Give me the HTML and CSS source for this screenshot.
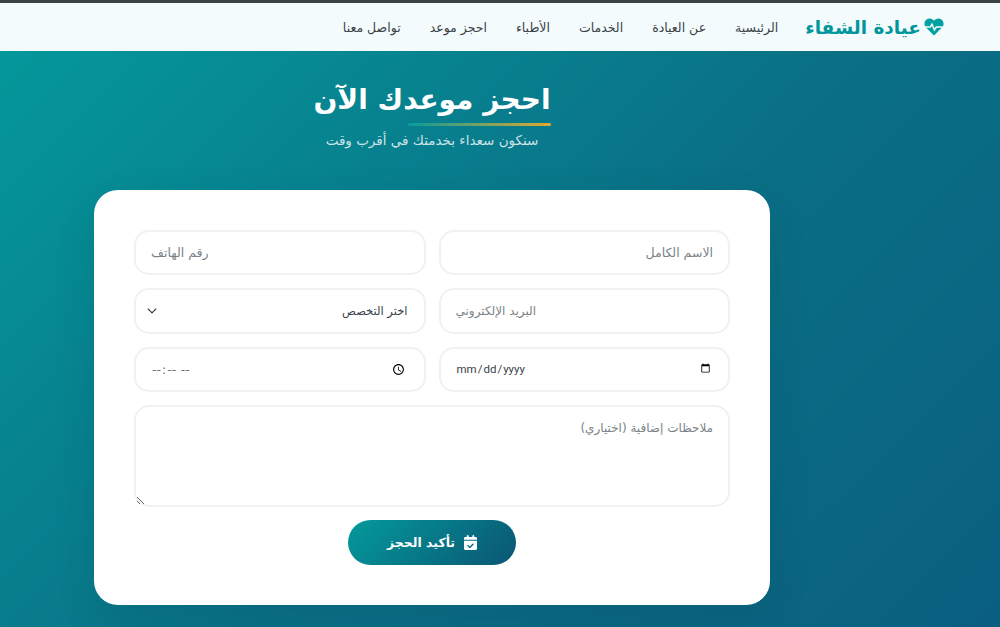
FILE: index.html
```html
<!DOCTYPE html>
<html lang="ar" dir="rtl">
<head>
<meta charset="utf-8">
<title>عيادة الشفاء</title>
<link rel="stylesheet" href="styles.css">
</head>
<body>
<header class="topbar">
  <a class="brand" href="#">
    <svg class="brand-icon" viewBox="0 0 24 22" aria-hidden="true">
      <path class="heart" d="M12 21.5 2.2 11.6C-.6 8.7-.1 4.3 2.6 2.1 5.3-.2 9.3.3 12 3.4 14.7.3 18.700-.2 21.400 2.100 24.100 4.300 24.600 8.700 21.800 11.600Z"/>
      <path class="pulse" d="M1 11h6.500l2-3.500 3 7 2.300-3.500H23"/>
    </svg>
    <span>عيادة الشفاء</span>
  </a>
  <nav class="links">
    <a href="#">الرئيسية</a>
    <a href="#">عن العيادة</a>
    <a href="#">الخدمات</a>
    <a href="#">الأطباء</a>
    <a href="#">احجز موعد</a>
    <a href="#">تواصل معنا</a>
  </nav>
</header>
<main class="booking">
  <div class="heading">
    <h1>احجز موعدك الآن</h1>
    <p>سنكون سعداء بخدمتك في أقرب وقت</p>
  </div>
  <form class="card">
    <div class="fields">
      <input class="field" type="text" placeholder="الاسم الكامل">
      <input class="field" type="tel" placeholder="رقم الهاتف">
      <input class="field email" type="email" placeholder="البريد الإلكتروني">
      <select class="field select">
        <option>اختر التخصص</option>
      </select>
      <input class="field stamp date" type="date">
      <input class="field stamp time" type="time">
      <textarea class="field notes" placeholder="ملاحظات إضافية (اختياري)"></textarea>
    </div>
    <button class="submit" type="button">
      <svg viewBox="0 0 448 512" aria-hidden="true"><path d="M128 0c18 0 32 14 32 32v32h128V32c0-18 14-32 32-32s32 14 32 32v32h48c27 0 48 21 48 48v48H0v-48c0-27 21-48 48-48h48V32c0-18 14-32 32-32ZM0 192h448v272c0 27-21 48-48 48H48c-27 0-48-21-48-48V192Zm329 105c-9-9-25-9-34 0L200 392l-47-47c-9-9-25-9-34 0s-9 25 0 34l64 64c9 9 25 9 34 0l112-112c9-9 9-25 0-34Z"/></svg>
      <span>تأكيد الحجز</span>
    </button>
  </form>
</main>
</body>
</html>
```
FILE: styles.css
```css
* { box-sizing: border-box; }
html, body { height: 100%; }
body {
  margin: 0;
  height: 627px;
  overflow: hidden;
  font-family: "DejaVu Sans", "Noto Sans", sans-serif;
  background: linear-gradient(135deg, #049a9c 0%, #0a7086 55%, #0a5f80 100%);
  border-top: 3px solid #3b4242;
}
.topbar {
  height: 48px;
  background: #f4fbfc;
  display: flex;
  align-items: center;
  padding: 0 56px 0 0;
  gap: 27px;
}
.brand {
  display: flex;
  align-items: center;
  gap: 3px;
  color: #00969c;
  font-size: 18.500px;
  font-weight: 700;
  text-decoration: none;
}
.brand-icon { width: 20px; height: 18px; }
.heart { fill: #00a0a3; }
.pulse { fill: none; stroke: #f4fbfc; stroke-width: 1.800; }
.links { display: flex; gap: 29px; }
.links a {
  color: #3a4248;
  font-size: 12.500px;
  text-decoration: none;
}
.booking {
  width: 864px;
  margin-left: 0;
  margin-right: auto;
}
.heading { text-align: center; padding-top: 28px; }
.heading h1 {
  display: inline-block;
  position: relative;
  margin: 0;
  color: #fff;
  font-size: 28px;
  line-height: 42px;
  font-weight: 700;
}
.heading h1::after {
  content: "";
  position: absolute;
  top: 44px;
  right: 0;
  width: 143px;
  height: 3px;
  border-radius: 2px;
  background: linear-gradient(90deg, #0a9a9c, #e0a82e);
}
.heading p {
  margin: 9px 0 0;
  color: rgba(255, 255, 255, .8);
  font-size: 13.500px;
  line-height: 20px;
}
.card {
  width: 676px;
  height: 415px;
  margin: 40px auto 0;
  padding: 40px;
  background: #fff;
  border-radius: 24px;
  box-shadow: 0 15px 40px rgba(0, 40, 60, .12);
  display: flex;
  flex-direction: column;
  align-items: center;
}
.fields {
  width: 100%;
  display: grid;
  grid-template-columns: 1fr 1fr;
  gap: 13px;
}
.field {
  height: 45.300px;
  padding: 0 15px;
  border: 2px solid #eef2f4;
  border-radius: 15px;
  background: #fff;
  color: #3a4248;
  font: 12.500px "DejaVu Sans", "Noto Sans", sans-serif;
}
.field::placeholder { color: #7a8288; opacity: 1; }
.email { direction: ltr; font-size: 12px; }
.select {
  appearance: none;
  font-size: 11.500px;
  padding: 0 16px;
  background: #fff url("data:image/svg+xml,%3Csvg xmlns='http://www.w3.org/2000/svg' viewBox='0 0 16 16'%3E%3Cpath fill='none' stroke='%23343a40' stroke-linecap='round' stroke-linejoin='round' stroke-width='2' d='m2 5 6 6 6-6'/%3E%3C/svg%3E") no-repeat left 11px center / 10px 10px;
}
.stamp { direction: ltr; color: #3a4248; }
.date { font: 11.500px Roboto, "DejaVu Sans", sans-serif; }
.time { color: #6b7378; }
.notes {
  grid-column: 1 / -1;
  height: 102px;
  padding: 14px 15px;
  font-size: 12px;
  display: block;
}
.submit {
  margin-top: 13px;
  width: 168px;
  height: 45px;
  border: 0;
  border-radius: 23px;
  background: linear-gradient(135deg, #049a9c 0%, #0a5572 100%);
  color: #fff;
  font: 700 12.500px "DejaVu Sans", "Noto Sans", sans-serif;
  display: flex;
  align-items: center;
  justify-content: center;
  gap: 9px;
}
.submit svg { width: 13px; height: 15px; fill: #fff; }
```
